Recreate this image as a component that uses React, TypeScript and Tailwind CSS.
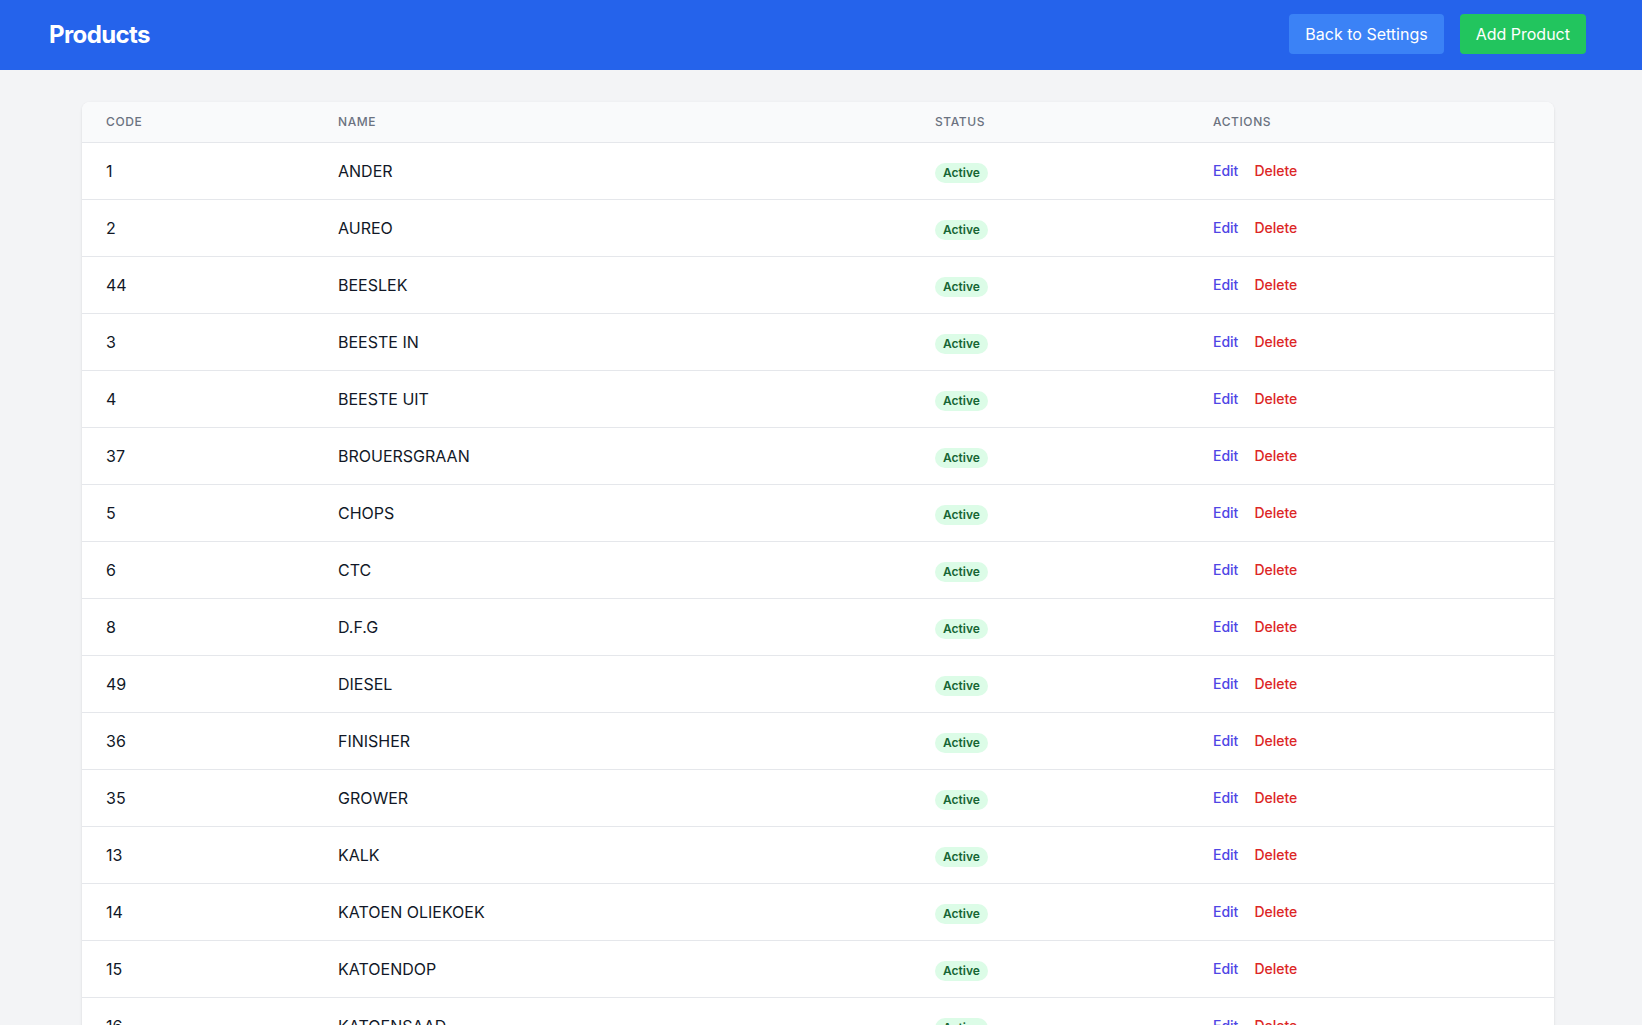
const products = [
  { code: "1", name: "ANDER" },
  { code: "2", name: "AUREO" },
  { code: "44", name: "BEESLEK" },
  { code: "3", name: "BEESTE IN" },
  { code: "4", name: "BEESTE UIT" },
  { code: "37", name: "BROUERSGRAAN" },
  { code: "5", name: "CHOPS" },
  { code: "6", name: "CTC" },
  { code: "8", name: "D.F.G" },
  { code: "49", name: "DIESEL" },
  { code: "36", name: "FINISHER" },
  { code: "35", name: "GROWER" },
  { code: "13", name: "KALK" },
  { code: "14", name: "KATOEN OLIEKOEK" },
  { code: "15", name: "KATOENDOP" },
  { code: "16", name: "KATOENSAAD" },
];

const cols = "grid grid-cols-[232px_597px_278px_1fr]";

export default function App() {
  return (
    <div className="min-h-screen bg-[#f3f4f6] font-['Inter',sans-serif]">
      {/* Top bar */}
      <header className="h-[70px] bg-[#2563eb] pl-[49px] pr-14 flex items-center justify-between">
        <h1 className="text-2xl font-bold tracking-tight text-white">Products</h1>
        <div className="flex items-center gap-4 -mt-[2px]">
          <button className="h-10 px-4 rounded bg-[#3b82f6] text-white text-base">
            Back to Settings
          </button>
          <button className="h-10 px-4 rounded bg-[#22c55e] text-white text-base">
            Add Product
          </button>
        </div>
      </header>

      <main className="pl-[82px] pr-[88px] py-8">
        <div className="bg-white rounded-lg shadow overflow-hidden">
          {/* Table head */}
          <div className={`${cols} bg-[#f9fafb] border-b border-[#e5e7eb] text-xs font-medium text-[#6b7280] uppercase tracking-wider`}>
            <div className="px-6 py-3">Code</div>
            <div className="px-6 py-3">Name</div>
            <div className="px-6 py-3">Status</div>
            <div className="px-6 py-3">Actions</div>
          </div>

          {/* Rows */}
          <div className="divide-y divide-[#e5e7eb]">
            {products.map((p) => (
              <div key={p.code} className={cols}>
                <div className="px-6 py-4 text-base leading-6 text-[#111827]">{p.code}</div>
                <div className="px-6 py-4 text-base leading-6 text-[#111827]">{p.name}</div>
                <div className="px-6 py-4 text-base leading-6">
                  <span className="inline-flex px-2 text-xs leading-5 font-semibold rounded-full bg-[#dcfce7] text-[#166534]">
                    Active
                  </span>
                </div>
                <div className="px-6 py-4 text-sm leading-6 font-medium">
                  <button className="text-[#4f46e5] mr-4">Edit</button>
                  <button className="text-[#dc2626]">Delete</button>
                </div>
              </div>
            ))}
          </div>
        </div>
      </main>
    </div>
  );
}
